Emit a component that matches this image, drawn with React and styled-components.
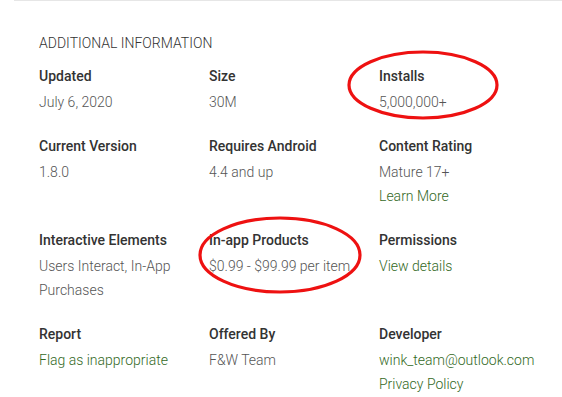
import React from "react";
import styled, { createGlobalStyle } from "styled-components";

const GlobalStyle = createGlobalStyle`
  body {
    margin: 0;
    background: #fff;
    font-family: Roboto, "Liberation Sans", Arial, sans-serif;
  }
`;

const Page = styled.div`
  position: relative;
  width: 562px;
  height: 397px;
  overflow: hidden;
`;

const Section = styled.section`
  margin-left: 14px;
  border-top: 1px solid #e6e6e6;
  padding: 30px 0 0 25px;
`;

const Title = styled.h2`
  margin: 0 0 9px;
  font-size: 14px;
  font-weight: 300;
  line-height: 24px;
  color: #333;
  text-transform: uppercase;
`;

const Grid = styled.div`
  display: grid;
  grid-template-columns: repeat(3, 170px);
  row-gap: 20px;
`;

const Item = styled.div`
  padding-right: 4px;
`;

const Label = styled.div`
  font-size: 14px;
  font-weight: 500;
  line-height: 24px;
  color: #333;
  margin-bottom: 2px;
`;

const Value = styled.div`
  font-size: 14px;
  font-weight: 300;
  line-height: 24px;
  color: ${p => (p.link ? "#33691e" : "#555")};
`;

const Annotations = styled.svg`
  position: absolute;
  top: 0;
  left: 0;
  pointer-events: none;
`;

const info = [
  { label: "Updated", values: ["July 6, 2020"] },
  { label: "Size", values: ["30M"] },
  { label: "Installs", values: ["5,000,000+"] },
  { label: "Current Version", values: ["1.8.0"] },
  { label: "Requires Android", values: ["4.4 and up"] },
  { label: "Content Rating", values: ["Mature 17+", { text: "Learn More", link: true }] },
  { label: "Interactive Elements", values: ["Users Interact, In-App Purchases"] },
  { label: "In-app Products", values: ["$0.99 - $99.99 per item"] },
  { label: "Permissions", values: [{ text: "View details", link: true }] },
  { label: "Report", values: [{ text: "Flag as inappropriate", link: true }] },
  { label: "Offered By", values: ["F&W Team"] },
  {
    label: "Developer",
    values: [
      { text: "wink_team@outlook.com", link: true },
      { text: "Privacy Policy", link: true },
    ],
  },
];

export default function App() {
  return (
    <Page>
      <GlobalStyle />
      <Section>
        <Title>Additional Information</Title>
        <Grid>
          {info.map(item => (
            <Item key={item.label}>
              <Label>{item.label}</Label>
              {item.values.map((v, i) =>
                typeof v === "string" ? (
                  <Value key={i}>{v}</Value>
                ) : (
                  <Value key={i} link>
                    {v.text}
                  </Value>
                )
              )}
            </Item>
          ))}
        </Grid>
      </Section>
      <Annotations width="562" height="397" viewBox="0 0 562 397">
        <ellipse cx="423" cy="85" rx="74" ry="33" fill="none" stroke="#ee1111" strokeWidth="3.2" />
        <ellipse cx="280" cy="255" rx="80" ry="37" fill="none" stroke="#ee1111" strokeWidth="3.2" />
      </Annotations>
    </Page>
  );
}
